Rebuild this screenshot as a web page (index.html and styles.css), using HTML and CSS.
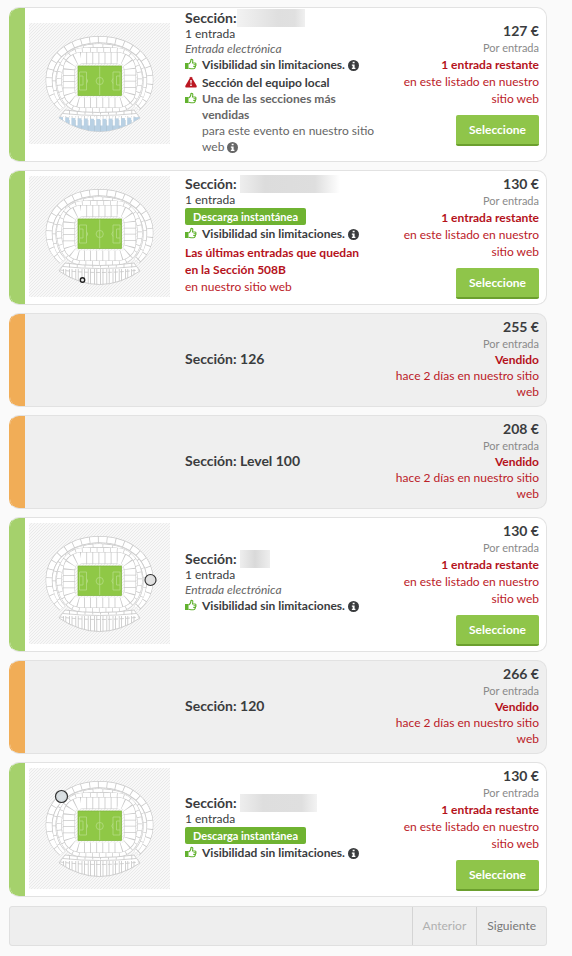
FILE: index.html
```html
<!DOCTYPE html>
<html lang="es">
<head>
<meta charset="utf-8">
<meta name="viewport" content="width=device-width, initial-scale=1">
<title>Entradas</title>
<link rel="stylesheet" href="styles.css">
</head>
<body>
<svg class="defs" aria-hidden="true">
  <defs>
    <clipPath id="stand-clip"><path d="M36 87Q70.500 92 105 87L111 95Q70.500 122 30 95Z"/></clipPath>
    <pattern id="hatch" width="3" height="3" patternUnits="userSpaceOnUse">
      <rect width="3" height="3" fill="#f8f8f8"/><path d="M-1 1L1 -1M0 3L3 0M2 4L4 2" stroke="#e6e6e6" stroke-width=".8"/>
    </pattern>
  </defs>
  <symbol id="stadium" viewBox="0 0 141 121">
    <rect width="141" height="121" fill="url(#hatch)"/>
    <g fill="none">
      <path d="M33 85C24 77 20 68 20 57C20 33 42 16.500 70.500 16.500S121 33 121 57C121 68 117 77 108 85" stroke="#c9c9c9" stroke-width="6.800"/>
      <path d="M33 85C24 77 20 68 20 57C20 33 42 16.500 70.500 16.500S121 33 121 57C121 68 117 77 108 85" stroke="#fff" stroke-width="5.600" stroke-dasharray="7.800 .8"/>
      <path d="M35 84C28 77 25 68 25 57C25 36 44 22.500 70.500 22.500S116 36 116 57C116 68 113 77 106 84" stroke="#c9c9c9" stroke-width="3.800"/>
      <path d="M35 84C28 77 25 68 25 57C25 36 44 22.500 70.500 22.500S116 36 116 57C116 68 113 77 106 84" stroke="#fff" stroke-width="2.800" stroke-dasharray="9 .7"/>
      <path d="M55 27H86C102 27 111 42 111 57S102 87 86 87H55C39 87 30 72 30 57S39 27 55 27Z" stroke="#c9c9c9" stroke-width="5.200"/>
      <path d="M55 27H86C102 27 111 42 111 57S102 87 86 87H55C39 87 30 72 30 57S39 27 55 27Z" stroke="#fff" stroke-width="4.200" stroke-dasharray="6 .7"/>
      <path d="M52 35H89Q101 37 101 48V67Q101 77 89 79H52Q40 77 40 67V48Q40 37 52 35Z" stroke="#c9c9c9" stroke-width="12"/>
      <path d="M52 35H89Q101 37 101 48V67Q101 77 89 79H52Q40 77 40 67V48Q40 37 52 35Z" stroke="#fff" stroke-width="11" stroke-dasharray="5.300 .8"/>
    </g>
    <rect x="46.500" y="41" width="48" height="33.500" fill="url(#hatch)"/>
    <rect x="49" y="43" width="43.500" height="29.500" fill="#8fc846" stroke="#7db53a" stroke-width=".7"/>
    <g fill="none" stroke="#b5dc85" stroke-width=".8">
      <path d="M70.700 43.500V72M50.500 49H57.500V67H50.500ZM50.500 53H54V62H50.500M91 49H84V67H91ZM91 53H87.500V62H91M57.500 55.500Q60 58 57.500 60.500M84 55.500Q81.500 58 84 60.500"/>
      <circle cx="70.700" cy="58" r="3.600"/>
    </g>
    <path d="M36 87Q70.500 92 105 87L111 95Q70.500 122 30 95Z" fill="#fff" stroke="#c9c9c9" stroke-width=".9"/>
    <g clip-path="url(#stand-clip)" fill="none" stroke="#c6c6c6">
      <path d="M34 90.500Q70.500 94.500 107 90.500" stroke-width=".8"/>
      <path d="M31 94Q70.500 99 110 94" stroke-width=".8" stroke-dasharray="4 2"/>
      <path d="M34 102H108" stroke-width="18" stroke-dasharray=".8 1.600 .8 3"/>
      <path d="M40 89H108" stroke-width="5" stroke-dasharray=".8 7"/>
    </g>
  </symbol>
  <symbol id="thumb" viewBox="0 0 24 22">
    <path d="M0 9H7V21H0Z" fill="#62b22f"/>
    <path d="M7 11C11 9 12 6 12 2C15 1 16 3 15.500 5.500L15 9H20Q22.500 9.500 21.800 12Q22.500 14 21 15Q21.500 17 20 18Q20 20.500 17 20.500H12L7 19.500M17 12.500H21M16.500 16H20.500" fill="none" stroke="#62b22f" stroke-width="2.200"/>
  </symbol>
  <symbol id="info" viewBox="0 0 20 20">
    <circle cx="10" cy="10" r="10" fill="currentColor"/>
    <path d="M8.500 3H12V6H8.500ZM7 8H12V14H13.500V16.500H7V14H8.500V10.500H7Z" fill="#fff"/>
  </symbol>
  <symbol id="warning" viewBox="0 0 24 22">
    <path d="M10.500 1.500Q12 -.5 13.500 1.500L23.500 19Q24 22 21.500 22H2.500Q0 22 .5 19Z" fill="#bb1722"/>
    <path d="M10.500 7H13.500L13 14H11ZM10.500 16H13.500V19H10.500Z" fill="#fff"/>
  </symbol>
</svg>

<main class="listings">
  <article class="card">
    <div class="map"><svg viewBox="0 0 141 121" role="img" aria-label="Mapa del estadio"><use href="#stadium"/><g clip-path="url(#stand-clip)" fill="none"><path d="M29 94Q70.500 98 112 94V122H29Z" fill="#b9d1e4"/><path d="M34 98H108" stroke="#fff" stroke-width="9" stroke-dasharray="2.200 4"/><path d="M34 104H108" stroke="#a9bccb" stroke-width="14" stroke-dasharray=".5 5.700"/></g></svg></div>
    <div class="details">
      <h2>Sección:<span class="mask mask-a"></span></h2>
      <p class="count">1 entrada</p>
      <p class="kind">Entrada electrónica</p>
      <p class="note"><svg class="icon"><use href="#thumb"/></svg><b>Visibilidad sin limitaciones. <svg class="info"><use href="#info"/></svg></b></p>
      <p class="note spaced"><svg class="icon"><use href="#warning"/></svg><b>Sección del equipo local</b></p>
      <p class="note muted"><svg class="icon"><use href="#thumb"/></svg><span><b>Una de las secciones más vendidas</b><br>para este evento en nuestro sitio web <svg class="info"><use href="#info"/></svg></span></p>
    </div>
    <div class="offer">
      <strong class="price">127 €</strong><span class="per">Por entrada</span>
      <p class="stock"><b>1 entrada restante</b><br>en este listado en nuestro sitio web</p>
      <button type="button">Seleccione</button>
    </div>
  </article>

  <article class="card">
    <div class="map"><svg viewBox="0 0 141 121" role="img" aria-label="Mapa del estadio"><use href="#stadium"/><circle cx="53.500" cy="104" r="2.200" fill="#eee" stroke="#222" stroke-width="1.400"/></svg></div>
    <div class="details">
      <h2>Sección:<span class="mask mask-b"></span></h2>
      <p class="count">1 entrada</p>
      <p class="badge">Descarga instantánea</p>
      <p class="note"><svg class="icon"><use href="#thumb"/></svg><b>Visibilidad sin limitaciones. <svg class="info"><use href="#info"/></svg></b></p>
      <p class="stock last"><b>Las últimas entradas que quedan en la Sección 508B</b><br>en nuestro sitio web</p>
    </div>
    <div class="offer">
      <strong class="price">130 €</strong><span class="per">Por entrada</span>
      <p class="stock"><b>1 entrada restante</b><br>en este listado en nuestro sitio web</p>
      <button type="button">Seleccione</button>
    </div>
  </article>

  <article class="card sold">
    <div class="details"><h2>Sección: 126</h2></div>
    <div class="offer">
      <strong class="price">255 €</strong><span class="per">Por entrada</span>
      <p class="stock"><b>Vendido</b><br>hace 2 días en nuestro sitio web</p>
    </div>
  </article>

  <article class="card sold">
    <div class="details"><h2>Sección: Level 100</h2></div>
    <div class="offer">
      <strong class="price">208 €</strong><span class="per">Por entrada</span>
      <p class="stock"><b>Vendido</b><br>hace 2 días en nuestro sitio web</p>
    </div>
  </article>

  <article class="card">
    <div class="map"><svg viewBox="0 0 141 121" role="img" aria-label="Mapa del estadio"><use href="#stadium"/><circle cx="121.500" cy="57" r="5.500" fill="#ddd" fill-opacity=".85" stroke="#333" stroke-width="1.200"/></svg></div>
    <div class="details">
      <h2>Sección:<span class="mask mask-c"></span></h2>
      <p class="count">1 entrada</p>
      <p class="kind">Entrada electrónica</p>
      <p class="note"><svg class="icon"><use href="#thumb"/></svg><b>Visibilidad sin limitaciones. <svg class="info"><use href="#info"/></svg></b></p>
    </div>
    <div class="offer">
      <strong class="price">130 €</strong><span class="per">Por entrada</span>
      <p class="stock"><b>1 entrada restante</b><br>en este listado en nuestro sitio web</p>
      <button type="button">Seleccione</button>
    </div>
  </article>

  <article class="card sold">
    <div class="details"><h2>Sección: 120</h2></div>
    <div class="offer">
      <strong class="price">266 €</strong><span class="per">Por entrada</span>
      <p class="stock"><b>Vendido</b><br>hace 2 días en nuestro sitio web</p>
    </div>
  </article>

  <article class="card">
    <div class="map"><svg viewBox="0 0 141 121" role="img" aria-label="Mapa del estadio"><use href="#stadium"/><circle cx="32.500" cy="28.500" r="6" fill="#d4dade" fill-opacity=".85" stroke="#333" stroke-width="1.200"/></svg></div>
    <div class="details">
      <h2>Sección:<span class="mask mask-d"></span></h2>
      <p class="count">1 entrada</p>
      <p class="badge">Descarga instantánea</p>
      <p class="note"><svg class="icon"><use href="#thumb"/></svg><b>Visibilidad sin limitaciones. <svg class="info"><use href="#info"/></svg></b></p>
    </div>
    <div class="offer">
      <strong class="price">130 €</strong><span class="per">Por entrada</span>
      <p class="stock"><b>1 entrada restante</b><br>en este listado en nuestro sitio web</p>
      <button type="button">Seleccione</button>
    </div>
  </article>

  <nav class="pager" aria-label="Paginación">
    <button type="button" disabled>Anterior</button>
    <button type="button">Siguiente</button>
  </nav>
</main>
</body>
</html>
```
FILE: styles.css
```css
* { box-sizing: border-box; }
body {
  margin: 0;
  background: #fafafa;
  color: #3a3c3e;
  font: 12px/16px Lato, "Open Sans", sans-serif;
}
h2, p { margin: 0; }
.defs { position: absolute; width: 0; height: 0; }

.listings {
  display: flex;
  flex-direction: column;
  gap: 8px;
  padding: 7px 25px 10px 9px;
}
.card {
  display: grid;
  grid-template-columns: 15px 141px minmax(0, 1fr) 150px;
  grid-template-areas: "strip map details offer";
  align-items: center;
  background: #fff;
  border: 1px solid #e2e2e2;
  border-left-color: #a5d16c;
  border-radius: 10px;
  padding-right: 7px;
  overflow: hidden;
}
.card::before {
  content: "";
  grid-area: strip;
  align-self: stretch;
  background: #a5d16c;
}
.card.sold { background: #efefef; border-left-color: #f1ad57; }
.card.sold::before { background: #f1ad57; }

.map { grid-area: map; padding: 4px 0 6px 4px; width: 145px; }
.map svg { display: block; width: 141px; height: 121px; }

.details { grid-area: details; padding: 2px 12px 6px 19px; }
.sold .details { padding-top: 3px; padding-bottom: 5px; }
h2 {
  display: flex;
  align-items: center;
  font-size: 14px;
  line-height: 16px;
}
.count { line-height: 15px; }
.kind { font-style: italic; color: #666; }
.note { display: flex; gap: 5px; }
.muted { color: #666; }
.spaced { margin-top: 2px; }
.icon { flex: none; width: 12px; height: 12px; margin-top: 1px; }
.info { width: 11px; height: 11px; vertical-align: -2px; }
.badge {
  width: max-content;
  margin: 1px 0;
  padding: 0 8px;
  border-radius: 2px;
  background: #6fb331;
  color: #fff;
  font-size: 11px;
  font-weight: 700;
  line-height: 17px;
}

.mask { height: 18px; margin: -1px 0 -1px 3px; }
.mask-a { width: 68px; margin-left: 0; background: linear-gradient(90deg, #f2f2f2, #dfdfdf 60%, #e0e0e0 85%, #f0f0f0); }
.mask-b { width: 100px; background: linear-gradient(90deg, #eee, #dcdcdc 25%, #dedede 75%, #fff); }
.mask-c { width: 30px; background: linear-gradient(90deg, #eee, #d9d9d9 50%, #eee); }
.mask-d { width: 77px; background: linear-gradient(90deg, #eee, #dedede 30%, #dfdfdf 80%, #f3f3f3); }

.offer {
  grid-area: offer;
  display: flex;
  flex-direction: column;
  align-items: flex-end;
  padding: 4px 0 5px;
  text-align: right;
}
.price { font-size: 14px; line-height: 18px; }
.per { color: #8a8a8a; font-size: 11px; line-height: 16px; }
.stock { color: #bb2028; line-height: 17px; }
.stock b { color: #b5121b; }
.last { margin-top: 2px; padding-right: 12px; }
.sold .offer { padding-bottom: 6px; }
.sold .stock { line-height: 16px; }
.offer button {
  height: 31px;
  margin-top: 8px;
  padding: 0 13px;
  border: 0;
  border-bottom: 2px solid #6b9f2e;
  border-radius: 2px;
  background: #8fc54a;
  color: #fff;
  font: 700 12px/16px Lato, "Open Sans", sans-serif;
}

.pager {
  display: flex;
  justify-content: flex-end;
  margin-top: 1px;
  border: 1px solid #e0e0e0;
  border-radius: 3px;
  background: #eee;
}
.pager button {
  padding: 10px;
  border: 0;
  border-left: 1px solid #d4d4d4;
  background: none;
  color: #777;
  font: 12px/18px Lato, "Open Sans", sans-serif;
}
.pager button:disabled { color: #b0b0b0; }
```
